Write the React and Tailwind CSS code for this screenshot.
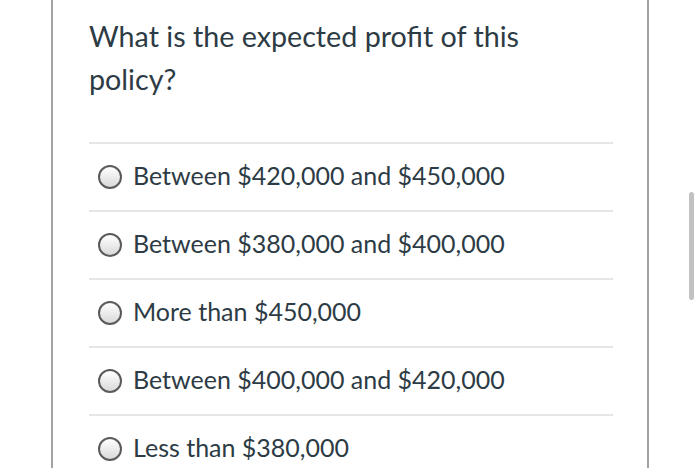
const options = [
  'Between $420,000 and $450,000',
  'Between $380,000 and $400,000',
  'More than $450,000',
  'Between $400,000 and $420,000',
  'Less than $380,000',
];

const Radio = () => (
  <span className="block w-[24px] h-[24px] shrink-0 rounded-full border-2 border-[#5b5b5b] bg-gradient-to-b from-[#ffffff] to-[#d9d9d9]" />
);

export default function App() {
  return (
    <div className="w-[700px] h-[471px] overflow-hidden bg-white flex" style={{ fontFamily: 'Lato, "Open Sans", sans-serif' }}>
      <div className="w-[51px] shrink-0" />
      <div className="w-[598px] h-[468px] shrink-0 border-x-2 border-[#a3a3a3] pl-[36px] pt-[15px]">
        <h1 className="text-[28.7px] leading-[43px] text-[#2d3b45] font-normal w-[460px]">
          What is the expected profit of this policy?
        </h1>
        <div className="mt-[41px] w-[524px]">
          {options.map((o) => (
            <div key={o} className="border-t-2 border-[#e6e6e6] h-[68px] flex items-center gap-[11px] pl-[9px]">
              <Radio />
              <span className="text-[25px] text-[#2d3b45] pb-[2px]">{o}</span>
            </div>
          ))}
        </div>
      </div>
      <div className="flex-1 relative">
        <div className="absolute left-[40px] top-[192px] w-[5px] h-[108px] rounded-full bg-[#c2c2c2]" />
      </div>
    </div>
  );
}
